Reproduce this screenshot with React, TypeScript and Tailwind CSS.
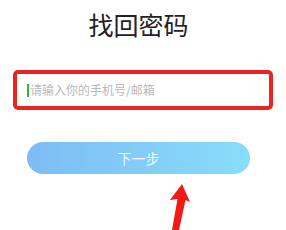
export default function App() {
  return (
    <div
      className="relative h-[230px] w-[286px] overflow-hidden bg-white"
      style={{ fontFamily: '"Noto Sans CJK SC", "Noto Sans", sans-serif' }}
    >
      <div className="flex flex-col items-center pt-[7px] pr-[9px]">
        <h1 className="text-[25px] leading-[34px] font-normal text-[#222]">找回密码</h1>
      </div>

      <div className="mx-[13px] mt-[29px] flex h-[40px] items-center rounded-[5px] border-[4px] border-[#e8261f] pl-[10px]">
        <span className="h-[13px] w-[2px] bg-[#3cb04a]" />
        <span className="ml-px text-[12px] leading-none text-[#b8b8b8]">请输入你的手机号/邮箱</span>
      </div>

      <div className="ml-[27px] mt-[32px] flex h-[32px] w-[223px] items-center justify-center rounded-full bg-gradient-to-r from-[#7dbcf4] to-[#88ddfb]">
        <span className="text-[14px] text-white/90">下一步</span>
      </div>

      <svg className="absolute left-0 top-0" width="286" height="230" viewBox="0 0 286 230">
        <polygon points="182,184 190,202 185.5,200 179,230 172,230 177.5,199 170,200" fill="#f01a16" />
      </svg>
    </div>
  );
}
